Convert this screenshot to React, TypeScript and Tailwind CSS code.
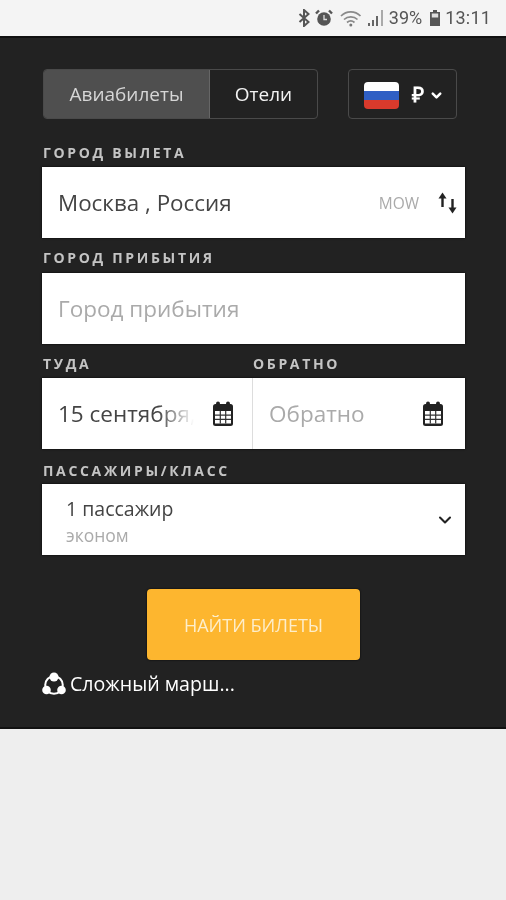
import { ChevronDown } from "lucide-react";

function Label({ text, className = "" }: { text: string; className?: string }) {
  return (
    <div className={`h-[14px] text-[14px] leading-[14px] font-bold tracking-[0.19em] text-[#c4c4c4] whitespace-nowrap ${className}`}>
      {text}
    </div>
  );
}

function CalendarIcon() {
  return (
    <svg width="22" height="25" viewBox="0 0 22 25" className="shrink-0">
      <rect x="1" y="3" width="20" height="22" rx="2.500" fill="#222" />
      <rect x="4" y="0.500" width="4" height="5" rx="2" fill="#222" />
      <rect x="14" y="0.500" width="4" height="5" rx="2" fill="#222" />
      <rect x="3" y="10" width="16" height="12.500" fill="#fff" />
      <path d="M3 14.200h16M3 18.400h16M8.300 10v12.500M13.700 10v12.500" stroke="#333" strokeWidth="1.200" />
    </svg>
  );
}

function SwapIcon() {
  return (
    <svg width="19" height="22" viewBox="0 0 19 22">
      <path d="M4.500 15V3" stroke="#222" strokeWidth="2.400" fill="none" />
      <path d="M0.500 6.500 4.500 0.500l4 6z" fill="#222" />
      <path d="M14.500 7v11" stroke="#222" strokeWidth="2.400" fill="none" />
      <path d="M10.500 15.500l4 6 4-6z" fill="#222" />
    </svg>
  );
}

function RouteIcon() {
  return (
    <svg width="24" height="25" viewBox="0 0 24 25" className="shrink-0">
      <circle cx="12" cy="13" r="8.800" fill="none" stroke="#fff" strokeWidth="2" />
      <circle cx="12" cy="5" r="4.500" fill="#fff" />
      <circle cx="4.500" cy="18" r="4.300" fill="#fff" />
      <circle cx="19.500" cy="18" r="4.300" fill="#fff" />
    </svg>
  );
}

function StatusBar() {
  return (
    <div className="h-[36px] bg-[#f4f4f4] flex items-center justify-end gap-[4px] pr-[15px] text-[#555] text-[18px]">
      <svg width="12" height="18" viewBox="0 0 12 18" className="mr-[1px]">
        <path d="M1.500 5l9 8-4.500 4V1l4.500 4-9 8" fill="none" stroke="#555" strokeWidth="2" />
      </svg>
      <svg width="18" height="18" viewBox="0 0 18 18">
        <circle cx="9" cy="10" r="6.800" fill="#555" />
        <path d="M1 4.500 4 1.500M17 4.500l-3-3" stroke="#555" strokeWidth="2.400" />
        <path d="M9 6v4.500h3" stroke="#ddd" strokeWidth="1.300" fill="none" />
      </svg>
      <svg width="24" height="18" viewBox="0 0 24 18" className="ml-[3px]">
        <path d="M1 7c5.500-5.500 14-5.500 19.500 0M4 10.500c3.800-3.600 9.800-3.600 13.500 0M7 13.500c2.200-1.900 5.300-1.900 7.500 0" fill="none" stroke="#8a8a8a" strokeWidth="1.700" />
        <circle cx="10.800" cy="16" r="1.500" fill="#777" />
      </svg>
      <svg width="19" height="18" viewBox="0 0 19 18" className="-ml-[2px]">
        <path d="M2 14h2v3H2zM6 11h2v6H6zM10 7h2v10h-2z" fill="#666" />
        <path d="M15 1h2v16h-2z" fill="#aaa" />
      </svg>
      <span className="font-['Roboto',sans-serif] leading-none">39%</span>
      <svg width="12" height="18" viewBox="0 0 12 18" className="ml-[3px]">
        <path d="M4 1h4v2h3v14H1V3h3z" fill="#555" />
        <rect x="2.800" y="4.500" width="6.400" height="4" fill="#ddd" />
      </svg>
      <span className="font-['Roboto',sans-serif] leading-none tracking-[0.01em]">13:11</span>
    </div>
  );
}

export default function App() {
  return (
    <div className="w-[506px] h-[900px] bg-[#eeeeee] font-['Open_Sans',sans-serif] overflow-hidden blur-[0.4px]">
      <StatusBar />
      <div className="h-[693px] bg-[#222222] px-[42px] pt-[33px] shadow-[inset_0_2px_0_#111,inset_0_-2px_0_#111]">
        <div className="flex items-start">
          <div className="ml-[1px] flex h-[50px] w-[275px] rounded-[4px] border border-[#4a4a4a] overflow-hidden text-[19px]">
            <div className="w-[166px] bg-[#4f4f4f] border-r border-[#666] flex items-center justify-center text-[#d6d6d6]">
              Авиабилеты
            </div>
            <div className="flex-1 flex items-center justify-center text-[#f2f2f2]">Отели</div>
          </div>
          <div className="ml-[30px] h-[50px] w-[109px] rounded-[4px] border border-[#4a4a4a] flex items-center pl-[15px]">
            <div className="mt-[3px] w-[35px] h-[27px] rounded-[4px] overflow-hidden flex flex-col">
              <div className="flex-1 bg-white" />
              <div className="flex-1 bg-[#2f5fc4]" />
              <div className="flex-1 bg-[#d83a2c]" />
            </div>
            <span className="ml-[13px] text-[21px] font-extrabold text-white leading-none">₽</span>
            <ChevronDown size={15} strokeWidth={4} className="ml-[5px] mt-[2px] text-white" />
          </div>
        </div>

        <Label text="ГОРОД ВЫЛЕТА" className="mt-[27px] ml-[1px]" />
        <div className="mt-[7px] h-[71px] w-[423px] bg-white shadow-[0_0_2px_#000] flex items-center pl-[16px] pr-[8px] text-[22.400px] text-[#444]">
          <span className="flex-1 pt-[1px]">Москва , Россия</span>
          <span className="text-[15.500px] text-[#aaa] mr-[19px] mt-[3px]">MOW</span>
          <SwapIcon />
        </div>

        <Label text="ГОРОД ПРИБЫТИЯ" className="mt-[13px] ml-[1px]" />
        <div className="mt-[8px] h-[71px] w-[423px] bg-white shadow-[0_0_2px_#000] flex items-center pl-[16px] text-[22.500px] text-[#aaa]">
          Город прибытия
        </div>

        <div className="mt-[13px] flex">
          <Label text="ТУДА" className="w-[210px] ml-[1px]" />
          <Label text="ОБРАТНО" />
        </div>
        <div className="mt-[7px] h-[71px] w-[423px] bg-white shadow-[0_0_2px_#000] flex text-[22.500px]">
          <div className="relative w-[211px] border-r border-[#ddd] flex items-center pl-[16px] pr-[18px] overflow-hidden">
            <span className="flex-1 whitespace-nowrap overflow-hidden text-[#444]">15 сентября, вс</span>
            <div className="absolute right-[58px] top-0 bottom-0 w-[36px] bg-gradient-to-r from-transparent to-white" />
            <div className="absolute right-0 top-0 bottom-0 w-[58px] bg-white" />
            <div className="absolute right-[18px] top-[23px] flex"><CalendarIcon /></div>
          </div>
          <div className="flex-1 flex items-center pl-[16px] pr-[21px] text-[#aaa]">
            <span className="flex-1">Обратно</span>
            <CalendarIcon />
          </div>
        </div>

        <Label text="ПАССАЖИРЫ/КЛАСС" className="mt-[15px] ml-[1px]" />
        <div className="mt-[6px] h-[71px] w-[423px] bg-white shadow-[0_0_2px_#000] flex items-center pl-[24px] pr-[10px]">
          <div className="flex-1 flex flex-col pt-[3px]">
            <span className="text-[19.500px] leading-[24px] text-[#444]">1 пассажир</span>
            <span className="mt-[4px] text-[17.500px] leading-[20px] text-[#aaa]">эконом</span>
          </div>
          <ChevronDown size={20} strokeWidth={2.500} className="text-[#222]" />
        </div>

        <div className="mt-[34px] ml-[105px] h-[71px] w-[213px] rounded-[4px] bg-[#fdb62f] shadow-[0_0_2px_#000] flex items-center justify-center pt-[2px] text-[18px] text-[#fdeecb]">
          НАЙТИ БИЛЕТЫ
        </div>

        <div className="mt-[11px] flex items-center gap-[4px] text-[19.600px] leading-[26px] text-white">
          <RouteIcon />
          <span>Сложный марш...</span>
        </div>
      </div>
    </div>
  );
}
